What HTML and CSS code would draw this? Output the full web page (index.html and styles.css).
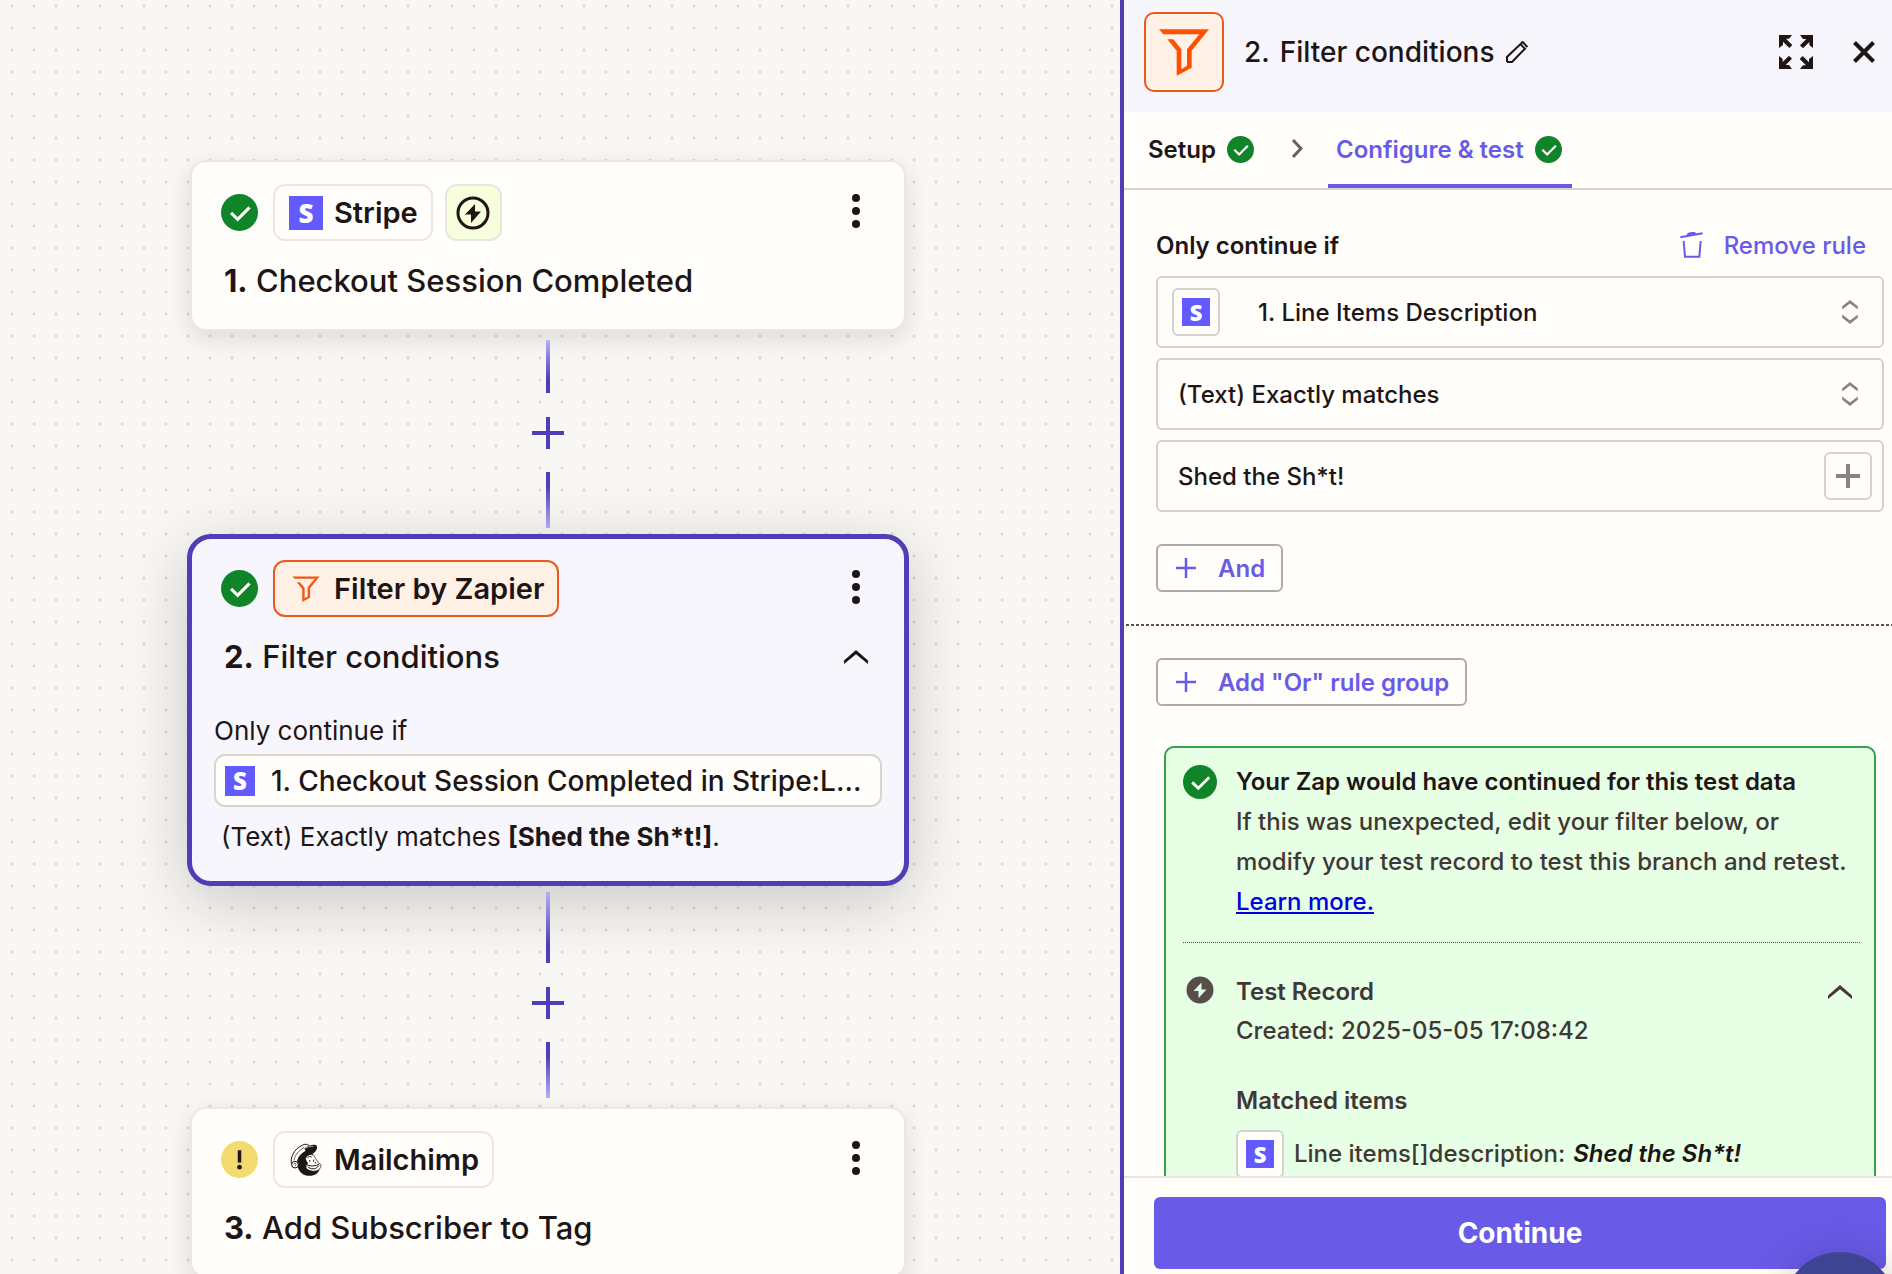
FILE: index.html
```
<!DOCTYPE html>
<html lang="en">
<head>
    <meta charset="UTF-8">
    <meta name="viewport" content="width=device-width, initial-scale=1.0">
    <title>Zap Editor</title>
    <link rel="stylesheet" href="styles.css">
</head>
<body>
    <!-- shared icons -->
    <svg class="sprite" aria-hidden="true">
        <symbol id="check" viewBox="0 0 36 36">
            <circle cx="18" cy="18" r="18" fill="#0f8429"/>
            <path d="M9.8 18.4l6.4 6.2L27.8 13" fill="none" stroke="#fffdf9" stroke-width="3"/>
        </symbol>
        <symbol id="kebab" viewBox="0 0 10 34">
            <circle cx="5" cy="4" r="4"/>
            <circle cx="5" cy="17" r="4"/>
            <circle cx="5" cy="30" r="4"/>
        </symbol>
        <symbol id="chevron-up" viewBox="0 0 24 14">
            <path d="M0 10.4L12 0l12 10.4V14L12 4.2 0 14z" fill="currentColor"/>
        </symbol>
        <symbol id="up-down" viewBox="0 0 48 74">
            <path d="M0 19L24 0l24 19v10L24 11 0 29zM0 45l24 18 24-18v10L24 74 0 55z" fill="currentColor"/>
        </symbol>
        <symbol id="plus" viewBox="0 0 24 24">
            <path d="M12 0v24M0 12h24" stroke="currentColor"/>
        </symbol>
    </svg>

    <div class="editor">
        <main class="canvas">
            <section class="card">
                <div class="card-top">
                    <svg class="status"><use href="#check"/></svg>
                    <button class="chip"><span class="stripe">S</span>Stripe</button>
                    <span class="chip chip-trigger">
                        <svg width="34" height="34" viewBox="0 0 34 34">
                            <circle cx="17" cy="17" r="15" fill="none" stroke="#201515" stroke-width="3"/>
                            <path d="M19 8L9 18.500h6V27l10-11.500h-6z" fill="#201515"/>
                        </svg>
                    </span>
                    <button class="kebab" aria-label="Step menu"><svg width="10" height="34"><use href="#kebab"/></svg></button>
                </div>
                <h2 class="card-title"><b>1.</b> Checkout Session Completed</h2>
            </section>

            <div class="connector">
                <span class="line line-down"></span>
                <button class="add-step" aria-label="Add step"><svg><use href="#plus"/></svg></button>
                <span class="line line-up"></span>
            </div>

            <section class="card card-selected">
                <div class="card-top">
                    <svg class="status"><use href="#check"/></svg>
                    <button class="chip chip-filter">
                        <svg width="34" height="34" viewBox="358 157 100 100">
                            <path d="M368 170h80l-28 35v27l-23 13v-39l-16-19h9l14 16v31l9-5v-27l21-25h-59z" fill="#f4550f"/>
                        </svg>
                        Filter by Zapier
                    </button>
                    <button class="kebab" aria-label="Step menu"><svg width="10" height="34"><use href="#kebab"/></svg></button>
                </div>
                <div class="card-title-row">
                    <h2 class="card-title"><b>2.</b> Filter conditions</h2>
                    <button class="collapse" aria-label="Collapse step"><svg width="24" height="14"><use href="#chevron-up"/></svg></button>
                </div>
                <div class="summary">
                    <p>Only continue if</p>
                    <div class="pill"><span class="stripe stripe-pill">S</span><span class="pill-text">1. Checkout Session Completed in Stripe:L...</span></div>
                    <p class="summary-rule">(Text) Exactly matches <b>[Shed the Sh*t!]</b>.</p>
                </div>
            </section>

            <div class="connector connector-long">
                <span class="line line-down"></span>
                <button class="add-step" aria-label="Add step"><svg><use href="#plus"/></svg></button>
                <span class="line line-up"></span>
            </div>

            <section class="card">
                <div class="card-top">
                    <svg class="status" viewBox="0 0 36 36">
                        <circle cx="18" cy="18" r="18" fill="#f3da71"/>
                        <rect x="16.300" y="9" width="3.400" height="12" fill="#201515"/>
                        <circle cx="18" cy="25.500" r="2.300" fill="#201515"/>
                    </svg>
                    <button class="chip">
                        <svg width="34" height="34" viewBox="0 0 102 102">
                            <path d="M8 66C2 46 14 18 40 7c8-5 16-4 20 1l-8 16c-14 8-24 20-25 36z" fill="#fffefb" stroke="#201515" stroke-width="3"/>
                            <path d="M15 52c3-16 14-30 30-38" fill="none" stroke="#201515" stroke-width="2"/>
                            <path d="M24 58C26 42 36 30 50 25L46 16c10-8 24-12 34-10 7 3 5 14-3 22-3 3-5 3-6 4l6 13 8 12 8 8c2 16-8 31-26 33-18 3-34-7-40-24z" fill="#1b1716"/>
                            <path d="M47 17c9-6 18-8 26-7" fill="none" stroke="#fffefb" stroke-width="2"/>
                            <path d="M50 46c5-12 18-14 25-9l5 10 8 12 8 6c1 10-6 17-17 19-12 2-25-2-28-11-2-6 6-8 4-14-2-4-6-8-5-13z" fill="#fffefb" stroke="#1b1716" stroke-width="2"/>
                            <circle cx="18" cy="65" r="10" fill="#fffefb" stroke="#201515" stroke-width="3"/>
                            <path d="M14 64c2-5 7-4 7 1l-3 5" fill="none" stroke="#201515" stroke-width="2"/>
                            <path d="M56 44c4-4 8-4 12-2M74 50v6M62 51v5M55 66c10 5 24 3 36-2M56 71c8 8 25 10 33-3M77 59l5 1" fill="none" stroke="#201515" stroke-width="3"/>
                        </svg>
                        Mailchimp
                    </button>
                    <button class="kebab" aria-label="Step menu"><svg width="10" height="34"><use href="#kebab"/></svg></button>
                </div>
                <h2 class="card-title"><b>3.</b> Add Subscriber to Tag</h2>
            </section>
        </main>

        <aside class="panel">
            <header class="panel-header">
                <div class="app-tile">
                    <svg width="50" height="47" viewBox="147 88 150 140">
                        <path d="M147 88h150l-52 65v51l-45 24v-75l-28-35h18l24 30v60l17-10v-50l37-45H160z" fill="#ff4f00"/>
                    </svg>
                </div>
                <h1 class="panel-title"><span class="num">2.</span>Filter conditions</h1>
                <button class="icon-btn rename" aria-label="Rename step">
                    <svg width="22" height="22" viewBox="0 0 66 66">
                        <path d="M3 63V48L50 3l14 15M3 63h15l41-42M44 10l12 13" fill="none" stroke="#201515" stroke-width="6"/>
                    </svg>
                </button>
                <button class="icon-btn expand" aria-label="Expand panel">
                    <svg width="34" height="34" viewBox="0 0 102 102">
                        <g id="arrow"><path d="M0 0h39l-9 11H21l19 19-9 9-19-19v10L0 39z"/></g>
                        <use href="#arrow" transform="rotate(90 51 51)"/>
                        <use href="#arrow" transform="rotate(180 51 51)"/>
                        <use href="#arrow" transform="rotate(270 51 51)"/>
                    </svg>
                </button>
                <button class="icon-btn close" aria-label="Close panel">
                    <svg width="22" height="22" viewBox="0 0 22 22"><path d="M1.500 1.500l19 19M20.500 1.500l-19 19" stroke="#201515" stroke-width="4"/></svg>
                </button>
            </header>

            <nav class="tabs">
                <button class="tab">Setup<svg class="tab-check"><use href="#check"/></svg></button>
                <svg class="tab-arrow" width="11" height="19" viewBox="0 0 11 19"><path d="M1 1l8 8.500L1 18" fill="none" stroke="#666260" stroke-width="3"/></svg>
                <button class="tab tab-active">Configure &amp; test<svg class="tab-check"><use href="#check"/></svg></button>
            </nav>

            <div class="panel-body">
                <div class="rule">
                    <div class="rule-head">
                        <h3>Only continue if</h3>
                        <button class="remove">
                            <svg width="23" height="26" viewBox="0 0 69 78">
                                <path d="M1 16L68 4M22 11l4-6 16-3 4 4M11 27l4 47h43l4-47" fill="none" stroke="currentColor" stroke-width="6"/>
                            </svg>
                            Remove rule
                        </button>
                    </div>
                    <div class="field">
                        <span class="tile"><span class="stripe stripe-small">S</span></span>
                        <select class="with-tile" aria-label="Field"><option>1. Line Items Description</option></select>
                        <svg class="field-arrows"><use href="#up-down"/></svg>
                    </div>
                    <div class="field">
                        <select aria-label="Condition"><option>(Text) Exactly matches</option></select>
                        <svg class="field-arrows"><use href="#up-down"/></svg>
                    </div>
                    <div class="field">
                        <input type="text" aria-label="Value" value="Shed the Sh*t!">
                        <button class="tile tile-plus" aria-label="Insert data"><svg width="24" height="24"><use href="#plus"/></svg></button>
                    </div>
                    <button class="outline-btn"><svg width="20" height="20"><use href="#plus"/></svg>And</button>
                </div>

                <div class="separator"></div>

                <div class="or-row">
                    <button class="outline-btn"><svg width="20" height="20"><use href="#plus"/></svg>Add "Or" rule group</button>
                </div>

                <div class="result">
                    <div class="result-row result-message">
                        <svg class="result-check"><use href="#check"/></svg>
                        <div>
                            <h3>Your Zap would have continued for this test data</h3>
                            <p>If this was unexpected, edit your filter below, or modify your test record to test this branch and retest. <a href="#">Learn more.</a></p>
                        </div>
                    </div>
                    <div class="result-row result-record">
                        <svg class="result-bolt" viewBox="0 0 28 28">
                            <circle cx="14" cy="14" r="13.500" fill="#574e4c"/>
                            <path d="M15.500 6.500L7.500 15h5v7l8-8.500h-5z" fill="#e6ffe5"/>
                        </svg>
                        <div class="record">
                            <h4>Test Record</h4>
                            <p>Created: 2025-05-05 17:08:42</p>
                            <h4 class="matched">Matched items</h4>
                            <div class="match">
                                <span class="tile"><span class="stripe stripe-small">S</span></span>
                                <span>Line items[]description:</span>
                                <em>Shed the Sh*t!</em>
                            </div>
                        </div>
                        <button class="result-toggle" aria-label="Collapse record"><svg width="24" height="14"><use href="#chevron-up"/></svg></button>
                    </div>
                </div>
            </div>

            <footer class="panel-footer">
                <button class="continue">Continue</button>
            </footer>
        </aside>
    </div>
    <button class="help" aria-label="Help"></button>
</body>
</html>
```

FILE: styles.css
```
* {
    box-sizing: border-box;
}
body {
    margin: 0;
    font-family: Inter, "Liberation Sans", sans-serif;
    font-size: 24px;
    font-weight: 500;
    color: #201515;
    overflow: hidden;
}
h1, h2, h3, h4, p {
    margin: 0;
    font-size: inherit;
    font-weight: inherit;
}
button, input, select {
    font: inherit;
    color: inherit;
    background: none;
    border: 0;
    padding: 0;
    margin: 0;
}
button {
    cursor: pointer;
}
svg {
    display: block;
    flex: none;
    fill: currentColor;
}
.sprite {
    position: absolute;
    width: 0;
    height: 0;
}
.editor {
    display: grid;
    grid-template-columns: 280fr 193fr;
    height: 100vh;
}

/* canvas */
.canvas {
    display: flex;
    flex-direction: column;
    align-items: center;
    padding: 160px 24px 0 0;
    overflow: hidden;
    background-color: #f8f7f4;
    background-image: radial-gradient(circle, #dcdad6 1px, transparent 2px);
    background-size: 22px 22px;
    background-position: 1px 17px;
}
.card {
    flex: none;
    width: 716px;
    max-width: 90%;
    padding: 22px 29px 28px;
    background: #fffefb;
    border: 2px solid #ebe9df;
    border-radius: 16px;
    box-shadow: 0 8px 24px rgba(32, 21, 21, 0.12);
}
.card-selected {
    width: 722px;
    margin: -3px 0;
    padding: 21px 29px 26px;
    background: #f7f6fd;
    border: 5px solid #503db8;
    border-radius: 24px;
    box-shadow: 0 16px 64px rgba(32, 21, 21, 0.2);
}
.card-top {
    display: flex;
    align-items: center;
    gap: 12px;
}
.status {
    width: 37px;
    height: 37px;
    margin-right: 3px;
}
.chip {
    display: flex;
    align-items: center;
    gap: 11px;
    height: 57px;
    padding: 0 13px 0 14px;
    font-size: 29px;
    font-weight: 600;
    background: #fffefb;
    border: 2px solid #ebe9df;
    border-radius: 12px;
}
.chip-trigger {
    width: 57px;
    padding: 0;
    justify-content: center;
    background: #f6fedb;
    border-color: #e6e8dc;
}
.chip-filter {
    background: #fff1e6;
    border-color: #ea5a1c;
}
.stripe {
    display: flex;
    align-items: center;
    justify-content: center;
    flex: none;
    width: 34px;
    height: 34px;
    font-family: "Open Sans", sans-serif;
    font-size: 26px;
    font-weight: 800;
    line-height: 1;
    color: #fff;
    background: #635bff;
}
.stripe-pill {
    width: 30px;
    height: 30px;
    font-size: 24px;
}
.stripe-small {
    width: 28px;
    height: 28px;
    font-size: 22px;
}
.kebab {
    margin-left: auto;
    padding: 0 14px 4px;
}
.card-title-row {
    display: flex;
    align-items: center;
    justify-content: space-between;
    margin-top: 20px;
}
.card-title {
    margin: 20px 0 0 3px;
    font-size: 31px;
    line-height: 40px;
}
.card-title-row .card-title {
    margin-top: 0;
}
.card-title b, .summary b {
    font-weight: 700;
}
.collapse {
    padding: 0 7px;
}
.summary {
    margin: 36px -7px 0;
    font-size: 26px;
    font-weight: 400;
    line-height: 36px;
}
.pill {
    display: flex;
    align-items: center;
    gap: 16px;
    height: 53px;
    margin: 5px 0 12px;
    padding: 0 10px 0 9px;
    font-size: 28px;
    font-weight: 500;
    background: #fffefb;
    border: 2px solid #d7d5cc;
    border-radius: 11px;
}
.pill-text {
    overflow: hidden;
    white-space: nowrap;
}
.summary-rule {
    padding-left: 7px;
}

.connector {
    display: flex;
    flex-direction: column;
    align-items: center;
    flex: none;
    padding: 9px 0;
}
.line {
    width: 4px;
    height: 56px;
}
.line-down {
    height: 53px;
    background: linear-gradient(#b9aef6, #503db8 75%);
}
.line-up {
    background: linear-gradient(#503db8 25%, #b9aef6);
}
.connector-long .line-down {
    height: 71px;
}
.add-step {
    display: flex;
    align-items: center;
    justify-content: center;
    width: 48px;
    height: 47px;
    margin: 16px 0;
    color: #503db8;
    background: #f8f7f4;
}
.add-step svg {
    width: 32px;
    height: 32px;
    stroke-width: 3;
}

/* side panel */
.panel {
    display: flex;
    flex-direction: column;
    min-width: 0;
    height: 100vh;
    background: #fffefb;
    border-left: 4px solid #503db8;
}
.panel-header {
    display: flex;
    align-items: center;
    height: 112px;
    padding: 0 17px 8px 20px;
    flex: none;
    background: #f7f6fd;
}
.app-tile {
    display: flex;
    align-items: center;
    justify-content: center;
    width: 80px;
    height: 80px;
    margin-right: 20px;
    background: #fff1e6;
    border: 2px solid #ea5a1c;
    border-radius: 10px;
}
.panel-title {
    font-size: 28px;
}
.panel-title .num {
    margin-right: 10px;
}
.rename {
    margin-left: 12px;
}
.expand {
    margin: 0 40px 0 auto;
}
.tabs {
    display: flex;
    align-items: stretch;
    height: 78px;
    padding-left: 16px;
    flex: none;
    border-bottom: 2px solid #d7d5cc;
}
.tab {
    display: flex;
    align-items: center;
    gap: 11px;
    padding: 2px 8px 0;
    font-weight: 600;
    border-bottom: 4px solid transparent;
}
.tab-active {
    padding: 2px 10px 0 8px;
    color: #695be8;
    border-color: #695be8;
}
.tab-check {
    width: 27px;
    height: 27px;
}
.tab-arrow {
    align-self: center;
    margin: 0 25px 4px 30px;
}
.panel-body {
    flex: 1;
    min-height: 0;
    overflow: hidden;
}
.rule {
    display: flex;
    flex-direction: column;
    gap: 10px;
    padding: 34px 8px 32px 32px;
}
.rule-head {
    display: flex;
    align-items: center;
    justify-content: space-between;
    height: 42px;
    padding-right: 18px;
    font-weight: 600;
}
.remove {
    display: flex;
    align-items: center;
    gap: 21px;
    font-weight: 500;
    color: #695be8;
}
.field {
    display: flex;
    align-items: center;
    height: 72px;
    padding: 0 10px 0 14px;
    border: 2px solid #d5d3c9;
    border-radius: 6px;
}
.field select, .field input {
    flex: 1;
    min-width: 0;
    height: 48px;
    padding-left: 6px;
    appearance: none;
    outline: none;
}
.field .with-tile {
    padding-left: 38px;
}
.field-arrows {
    width: 16px;
    height: 24px;
    margin-right: 14px;
    color: #88847f;
}
.tile {
    display: flex;
    align-items: center;
    justify-content: center;
    flex: none;
    width: 48px;
    height: 48px;
    background: #fffefb;
    border: 2px solid #d5d3c9;
    border-radius: 6px;
}
.tile-plus {
    color: #88847f;
    stroke-width: 4;
}
.outline-btn {
    display: flex;
    align-items: center;
    gap: 22px;
    align-self: flex-start;
    height: 48px;
    padding: 0 16px 0 18px;
    font-weight: 600;
    color: #695be8;
    stroke-width: 3;
    border: 2px solid #aeacaa;
    border-radius: 6px;
}
.rule .outline-btn {
    margin-top: 22px;
}
.separator {
    height: 2px;
    margin-left: 2px;
    background: repeating-linear-gradient(90deg, #57534e 0 3px, transparent 3px 5px);
}
.or-row {
    padding: 32px 32px 40px;
}
.result {
    margin: 0 16px 0 40px;
    padding: 14px 14px 40px 17px;
    color: #413735;
    line-height: 40px;
    background: #e6ffe5;
    border: 2px solid #34a04a;
    border-radius: 10px;
}
.result-row {
    display: flex;
    align-items: flex-start;
}
.result-message {
    padding-bottom: 20px;
    border-bottom: 1px dotted #574e4c;
}
.result-message h3 {
    font-weight: 600;
    color: #201515;
}
.result-message a {
    color: #0000e0;
}
.result-check {
    width: 34px;
    height: 34px;
    margin: 3px 19px 0 0;
}
.result-record {
    padding-top: 30px;
}
.result-bolt {
    width: 28px;
    height: 28px;
    margin: 3px 22px 0 3px;
}
.record {
    flex: 1;
    min-width: 0;
}
.record h4 {
    font-weight: 600;
    line-height: 38px;
}
.record .matched {
    margin: 31px 0 10px;
}
.match {
    display: flex;
    align-items: center;
}
.match span + span {
    margin: 0 8px 0 10px;
}
.match em {
    overflow: hidden;
    font-weight: 600;
    color: #201515;
}
.result-toggle {
    padding: 12px 8px;
}
.panel-footer {
    flex: none;
    padding: 19px 6px 5px 30px;
    border-top: 2px solid #e8e6e3;
}
.continue {
    display: block;
    width: 100%;
    height: 72px;
    font-size: 28px;
    font-weight: 700;
    color: #fff;
    background: #695be8;
    border-radius: 6px;
}

/* chat launcher sits over the panel corner */
.help {
    position: fixed;
    right: -5px;
    bottom: -92px;
    width: 114px;
    height: 114px;
    background: #3d4592;
    border-radius: 50%;
    box-shadow: 0 2px 40px rgba(0, 0, 0, 0.2);
}
```
